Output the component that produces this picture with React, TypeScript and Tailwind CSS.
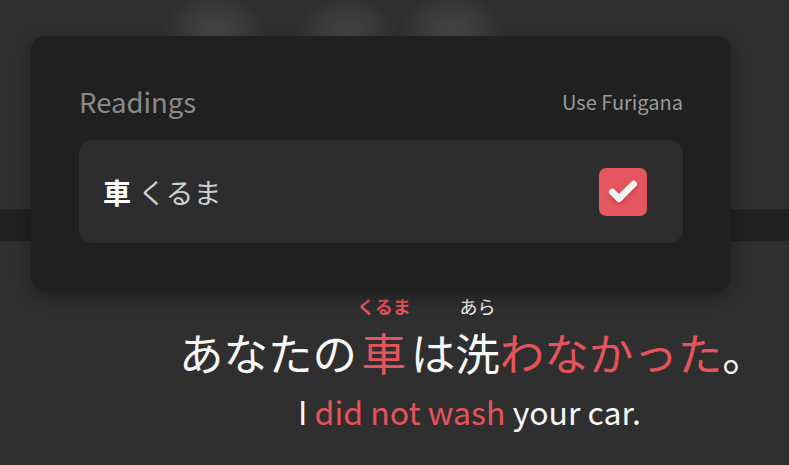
import { Check } from 'lucide-react';

const font = { fontFamily: '"Noto Sans CJK JP", "Noto Sans", sans-serif' };

function Glow({ className }: { className: string }) {
  return (
    <div
      className={`absolute h-[110px] w-[110px] rounded-full bg-[radial-gradient(circle,rgba(255,255,255,0.14)_0%,rgba(255,255,255,0.06)_40%,rgba(255,255,255,0)_70%)] ${className}`}
    />
  );
}

function Ruby({ rt, rtClass, children }: { rt?: string; rtClass?: string; children: React.ReactNode }) {
  return (
    <div className="flex flex-col items-center">
      <div className={`h-[27px] text-[18px] leading-[26px] ${rtClass ?? ''}`}>{rt ?? ''}</div>
      <div className="text-[44.5px] leading-[64px]">{children}</div>
    </div>
  );
}

export default function App() {
  return (
    <div className="relative h-[465px] w-[789px] overflow-hidden bg-[#2f2f2f]" style={font}>
      {/* background page content */}
      <div className="relative h-[209px]">
        <Glow className="left-[160px] top-[-12px]" />
        <Glow className="left-[292px] top-[-8px]" />
        <Glow className="left-[396px] top-[-12px]" />
      </div>
      <div className="h-[32px] bg-[#212121]" />

      <div className="flex pl-[179px] pt-[52px] text-[#f7f7f7]">
        <Ruby>あなたの</Ruby>
        <Ruby rt="くるま" rtClass="font-bold text-[#e5545c]">
          <span className="text-[#e5545c]">車</span>
        </Ruby>
        <Ruby>は</Ruby>
        <Ruby rt="あら" rtClass="text-[#f2f2f2]">洗</Ruby>
        <Ruby>
          <span className="text-[#e5545c]">わなかった</span>
        </Ruby>
        <Ruby>。</Ruby>
      </div>
      <div className="mt-[4px] pl-[298px] text-[32px] leading-[46px] text-[#f7f7f7]">
        I <span className="text-[#e5545c]">did not wash</span> your car.
      </div>

      {/* settings popover */}
      <div className="absolute left-[31px] top-[36px] w-[700px] rounded-[14px] bg-[#202020] px-12 pb-12 pt-[50px] shadow-[0_6px_18px_rgba(0,0,0,0.35)]">
        <div className="mb-[22px] flex h-8 items-center justify-between">
          <span className="text-[27.5px] text-[#8a8a8a]">Readings</span>
          <span className="text-[20px] text-[#9a9a9a]">Use Furigana</span>
        </div>
        <div className="flex h-[103px] items-center justify-between rounded-[14px] bg-[#2d2d2d] pl-6 pr-9">
          <div className="flex items-center text-[28px]">
            <span className="font-bold text-white">車</span>
            <span className="ml-[7px] text-[#cfcfcf]">くるま</span>
          </div>
          <div className="flex h-[48px] w-[48px] items-center justify-center rounded-[7px] bg-[#e5575f]">
            <Check size={32} strokeWidth={5} className="text-[#f4f4f4] drop-shadow-[0_2px_2px_rgba(0,0,0,0.2)]" />
          </div>
        </div>
      </div>
    </div>
  );
}
